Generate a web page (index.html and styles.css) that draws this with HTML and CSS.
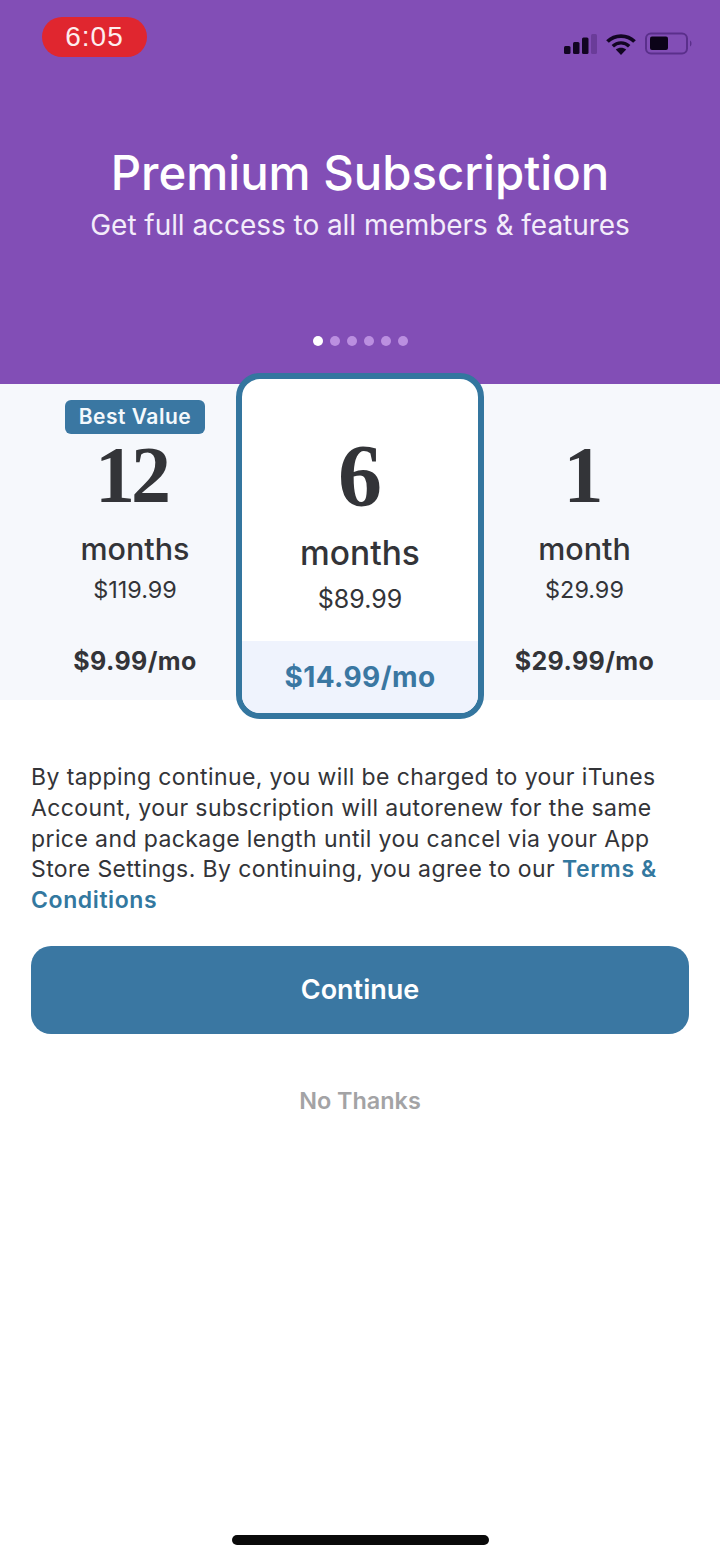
FILE: index.html
```html
<!DOCTYPE html>
<html lang="en">
<head>
<meta charset="utf-8">
<title>Premium Subscription</title>
<link rel="stylesheet" href="styles.css">
</head>
<body>
<main class="screen">
  <header class="hero">
    <div class="status">
      <span class="time">6:05</span>
      <div class="status-icons">
        <svg class="signal" width="33" height="22" viewBox="0 0 33 22"><rect x="0" y="13" width="6.500" height="8" rx="1.500" fill="#120522"/><rect x="9" y="9" width="6.500" height="12" rx="1.500" fill="#120522"/><rect x="18" y="4.500" width="6.500" height="16.500" rx="1.500" fill="#120522"/><rect x="27" y="1" width="6" height="20" rx="1.500" fill="#6a3c99"/></svg>
        <svg class="wifi" width="30" height="22" viewBox="0 0 30 22"><path d="M1.500 8.500C8.800 1.200 21.200 1.200 28.500 8.500" fill="none" stroke="#120522" stroke-width="3.800"/><path d="M6.800 13.200C11.300 8.800 18.700 8.800 23.200 13.200" fill="none" stroke="#120522" stroke-width="3.400"/><path d="M15 22L9.800 16.500C12.800 14 17.200 14 20.200 16.500Z" fill="#120522"/></svg>
        <svg class="battery" width="48" height="24" viewBox="0 0 48 24"><rect x="1" y="1.500" width="41" height="20" rx="5" fill="none" stroke="#5a2f8b" stroke-width="2"/><rect x="5" y="4.500" width="18" height="13.500" rx="2" fill="#0c0318"/><path d="M45 8.500C47 9.500 47 13.500 45 14.500Z" fill="#5a2f8b"/></svg>
      </div>
    </div>
    <h1 class="title">Premium Subscription</h1>
    <p class="subtitle">Get full access to all members &amp; features</p>
    <div class="dots">
      <span class="dot dot-on"></span><span class="dot"></span><span class="dot"></span><span class="dot"></span><span class="dot"></span><span class="dot"></span>
    </div>
  </header>

  <section class="plans">
    <article class="plan plan-left">
      <span class="badge">Best Value</span>
      <div class="count count-pair">12</div>
      <div class="unit">months</div>
      <div class="price">$119.99</div>
      <div class="monthly">$9.99/mo</div>
    </article>
    <article class="card">
      <div class="card-top">
        <div class="count count-lg">6</div>
        <div class="unit unit-lg">months</div>
        <div class="price price-lg">$89.99</div>
      </div>
      <div class="card-foot">$14.99/mo</div>
    </article>
    <article class="plan plan-right">
      <span class="badge badge-empty"></span>
      <div class="count count-one">1</div>
      <div class="unit">month</div>
      <div class="price">$29.99</div>
      <div class="monthly">$29.99/mo</div>
    </article>
  </section>

  <section class="details">
    <p class="legal">By tapping continue, you will be charged to your iTunes Account, your subscription will autorenew for the same price and package length until you cancel via your App Store Settings. By continuing, you agree to our <a class="terms">Terms &amp; Conditions</a></p>
    <button class="continue">Continue</button>
    <div class="no-thanks">No Thanks</div>
  </section>

  <div class="home-bar"></div>
</main>
</body>
</html>
```
FILE: styles.css
```css
* { box-sizing: border-box; }
html, body { margin: 0; padding: 0; }
body { background: #fff; font-family: Inter, "Noto Sans", sans-serif; color: #333438; }
.screen { width: 720px; height: 1560px; display: flex; flex-direction: column; overflow: hidden; }

.hero { height: 384px; background: #824eb6; color: #fff; display: flex; flex-direction: column; align-items: center; padding-top: 17px; }
.status { width: 100%; height: 40px; padding: 0 27px 0 42px; display: flex; justify-content: space-between; align-items: flex-start; }
.time { width: 105px; height: 40px; border-radius: 20px; background: #e0262f; color: #fdeeee; font-family: "Liberation Sans", Arial, sans-serif; font-size: 28px; line-height: 40px; letter-spacing: 1px; text-align: center; }
.status-icons { display: flex; align-items: center; gap: 9px; margin-top: 15px; }
.status-icons svg { display: block; }
.title { margin: 92px 0 0; font-size: 47.300px; line-height: 48px; font-weight: 550; }
.subtitle { margin: 13px 0 0; font-size: 28px; line-height: 30px; font-weight: 400; letter-spacing: -0.05px; color: #f3ecfa; }
.dots { display: flex; gap: 7px; margin-top: 96px; }
.dot { width: 10px; height: 10px; border-radius: 50%; background: #bb8fe0; }
.dot-on { background: #fff; }

.plans { height: 316px; background: #f6f8fc; display: grid; grid-template-columns: 236px 248px 236px; }
.plan { display: flex; flex-direction: column; align-items: center; padding-top: 16px; }
.plan-left { padding-left: 34px; }
.plan-right { padding-right: 35px; }
.badge { width: 140px; height: 34px; border-radius: 6px; background: #3a77a2; color: #f4f9fc; font-size: 21px; line-height: 34px; font-weight: 600; text-align: center; letter-spacing: 0.5px; }
.badge-empty { background: transparent; }
.count { font-family: "Liberation Serif", "Times New Roman", serif; font-weight: 700; font-size: 80px; line-height: 80px; letter-spacing: -4px; margin-top: 1px; height: 80px; }
.count-pair { padding-right: 8px; }
.count-one { padding-right: 6px; }
.unit { font-size: 30.500px; line-height: 36px; font-weight: 500; margin-top: 16px; }
.price { font-size: 23.400px; line-height: 28px; margin-top: 9px; }
.monthly { font-size: 25px; line-height: 30px; font-weight: 700; letter-spacing: 0.4px; margin-top: 42px; }

.card { margin: -11px 0 -19px; border: 6px solid #34769f; border-radius: 24px; background: #fff; display: flex; flex-direction: column; overflow: hidden; position: relative; }
.card-top { flex: 1; display: flex; flex-direction: column; align-items: center; padding-top: 53px; }
.count-lg { font-size: 88px; line-height: 88px; height: 88px; margin-top: 0; letter-spacing: 0; }
.unit-lg { font-size: 33.500px; line-height: 38px; margin-top: 14px; }
.price-lg { font-size: 25px; line-height: 30px; margin-top: 12px; }
.card-foot { height: 72px; background: #eff3fd; color: #3a77a2; font-size: 28px; line-height: 72px; font-weight: 700; letter-spacing: 0.4px; text-align: center; }

.details { padding: 0 31px; display: flex; flex-direction: column; }
.legal { margin: 62px 0 0; font-size: 23px; line-height: 30.750px; letter-spacing: 0.4px; color: #333438; }
.terms { color: #33789f; font-weight: 600; letter-spacing: 0.6px; }
.continue { margin-top: 30px; height: 88px; border: 0; border-radius: 20px; background: #3a77a2; color: #fff; font-family: inherit; font-size: 27px; font-weight: 600; }
.no-thanks { margin-top: 52px; text-align: center; color: #a3a3a5; font-size: 23.400px; line-height: 30px; font-weight: 600; }

.home-bar { width: 257px; height: 10px; border-radius: 5px; background: #0a0a0a; margin: auto auto 15px; }
```
